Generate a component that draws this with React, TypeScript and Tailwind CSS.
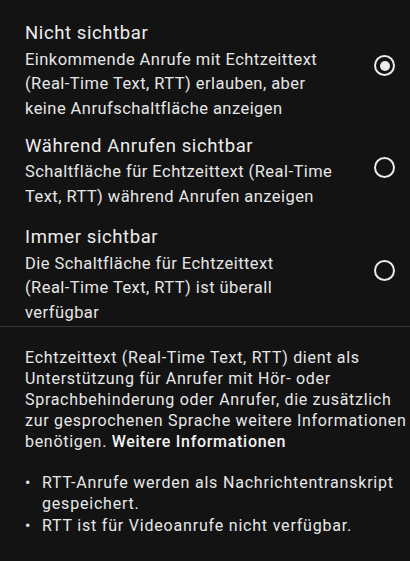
import React from "react";

type Option = {
  title: string;
  lines: string[];
  selected: boolean;
  gap: string;
  radioShift: string;
};

const options: Option[] = [
  {
    title: "Nicht sichtbar",
    lines: [
      "Einkommende Anrufe mit Echtzeittext",
      "(Real-Time Text, RTT) erlauben, aber",
      "keine Anrufschaltfläche anzeigen",
    ],
    selected: true,
    gap: "mb-[12.5px]",
    radioShift: "mb-[11px]",
  },
  {
    title: "Während Anrufen sichtbar",
    lines: [
      "Schaltfläche für Echtzeittext (Real-Time",
      "Text, RTT) während Anrufen anzeigen",
    ],
    selected: false,
    gap: "mb-[16px]",
    radioShift: "mb-[7px]",
  },
  {
    title: "Immer sichtbar",
    lines: [
      "Die Schaltfläche für Echtzeittext",
      "(Real-Time Text, RTT) ist überall",
      "verfügbar",
    ],
    selected: false,
    gap: "mb-[0.5px]",
    radioShift: "mb-[9px]",
  },
];

function Radio({ selected, className }: { selected: boolean; className: string }) {
  return (
    <div
      className={`w-[21px] h-[21px] rounded-full border-[2.5px] border-[#ececec] flex items-center justify-center shrink-0 ${className}`}
    >
      {selected && <div className="w-[10px] h-[10px] rounded-full bg-[#ececec]" />}
    </div>
  );
}

export default function App() {
  return (
    <div
      className="w-[410px] h-[561px] overflow-hidden bg-[#131313] text-[#e8e8e8]"
      style={{ fontFamily: "Roboto, 'Noto Sans', sans-serif" }}
    >
      <div className="pt-[21px]">
        {options.map((opt) => (
          <div key={opt.title} className={`flex items-center pl-[25px] pr-[15px] ${opt.gap}`}>
            <div className="flex-1">
              <div className="text-[18.5px] leading-[24px] tracking-[0.6px] mb-[2.5px] text-[#ededed]">
                {opt.title}
              </div>
              <div className="text-[16.5px] leading-[24.5px] tracking-[0.45px] text-[#e6e6e6] whitespace-nowrap">
                {opt.lines.map((l) => (
                  <div key={l}>{l}</div>
                ))}
              </div>
            </div>
            <Radio selected={opt.selected} className={opt.radioShift} />
          </div>
        ))}
      </div>

      {/* divider */}
      <div className="h-px bg-[#3a3a3a]" />

      <div className="pl-[25px] pt-[20px] text-[16px] text-[#e8e8e8]">
        <p className="leading-[21px] tracking-[0.7px] whitespace-nowrap">
          Echtzeittext (Real-Time Text, RTT) dient als
          <br />
          Unterstützung für Anrufer mit Hör- oder
          <br />
          Sprachbehinderung oder Anrufer, die zusätzlich
          <br />
          zur gesprochenen Sprache weitere Informationen
          <br />
          benötigen. <span className="font-medium text-[#f4f4f4]">Weitere Informationen</span>
        </p>

        <ul className="mt-[20px] leading-[21.5px] tracking-[0.8px]">
          <li className="flex">
            <span className="w-[17px] shrink-0">•</span>
            <span className="whitespace-nowrap">
              RTT-Anrufe werden als Nachrichtentranskript
              <br />
              gespeichert.
            </span>
          </li>
          <li className="flex">
            <span className="w-[17px] shrink-0">•</span>
            <span className="whitespace-nowrap">RTT ist für Videoanrufe nicht verfügbar.</span>
          </li>
        </ul>
      </div>
    </div>
  );
}
